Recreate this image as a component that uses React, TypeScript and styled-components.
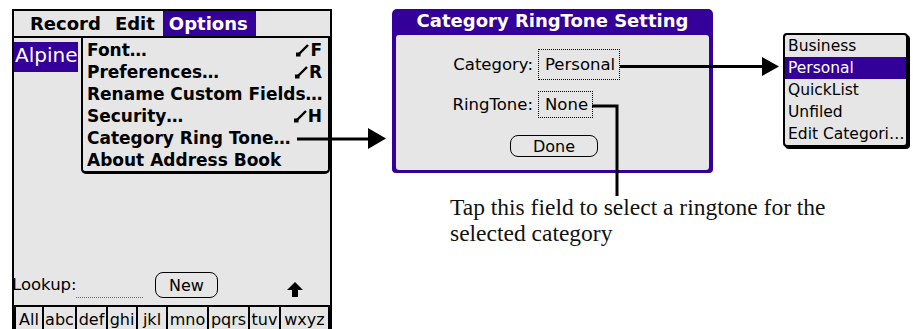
import React from 'react';
import styled, { createGlobalStyle } from 'styled-components';

const PURPLE = '#330099';
const SCREEN_BG = '#e6e6e6';
const PALM_FONT = '"DejaVu Sans", Verdana, sans-serif';

const Global = createGlobalStyle`
  html, body { margin: 0; padding: 0; background: #fff; overflow: hidden; }
  body { width: 913px; height: 329px; }
`;

const Figure = styled.div`
  position: relative;
  width: 913px;
  height: 329px;
  overflow: hidden;
  display: flex;
  align-items: flex-start;
  font-family: ${PALM_FONT};
  color: #000;
`;

/* ---------- Palm screen ---------- */
const Screen = styled.div`
  flex-shrink: 0;
  margin: 9px 0 0 12px;
  width: 316px;
  height: 340px;
  border: 2px solid #000;
  background: ${SCREEN_BG};
  display: flex;
  flex-direction: column;
  overflow: hidden;
`;

const MenuBar = styled.div`
  flex-shrink: 0;
  height: 25px;
  border-bottom: 2px solid #000;
  display: flex;
  padding-left: 10px;
  font-weight: bold;
  font-size: 18px;
  line-height: 25px;
`;

const MenuTitle = styled.div<{ $active?: boolean }>`
  padding: 0 8px 0 6px;
  background: ${(p) => (p.$active ? PURPLE : 'transparent')};
  color: ${(p) => (p.$active ? '#fff' : '#000')};
`;

const ListArea = styled.div`
  position: relative;
  flex-shrink: 0;
  height: 230px;
  padding-top: 4px;
  box-sizing: border-box;
`;

const ListRow = styled.div<{ $selected?: boolean }>`
  width: 64px;
  height: 30px;
  padding-left: 1px;
  box-sizing: border-box;
  font-size: 20px;
  line-height: 26px;
  white-space: nowrap;
  overflow: hidden;
  background: ${(p) => (p.$selected ? PURPLE : 'transparent')};
  color: ${(p) => (p.$selected ? '#fff' : '#000')};
`;

const Menu = styled.div`
  position: absolute;
  top: 0;
  left: 67px;
  right: 0;
  background: ${SCREEN_BG};
  border: 2px solid #000;
  border-top: none;
  border-bottom-width: 3px;
  border-radius: 0 0 5px 5px;
  padding: 1px 6px 0 4px;
  font-weight: bold;
  font-size: 17px;
  line-height: 22px;
`;

const MenuItem = styled.div`
  height: 22px;
  display: flex;
  justify-content: space-between;
  align-items: center;
  white-space: nowrap;
`;

const Shortcut = styled.span`
  display: flex;
  align-items: center;
  gap: 1px;
`;

const LookupRow = styled.div`
  flex-shrink: 0;
  height: 34px;
  margin-bottom: 3px;
  display: flex;
  align-items: center;
`;

const LookupLabel = styled.span`
  flex-shrink: 0;
  width: 64px;
  margin-left: -2px;
  font-size: 16.5px;
  line-height: 20px;
  white-space: nowrap;
`;

const LookupField = styled.span`
  flex-shrink: 0;
  align-self: flex-start;
  margin-top: 29px;
  width: 67px;
  border-top: 1px dotted #666;
`;

const PalmButton = styled.div<{ $w: number; $h: number }>`
  flex-shrink: 0;
  width: ${(p) => p.$w}px;
  height: ${(p) => p.$h}px;
  box-sizing: border-box;
  border: 1.5px solid #000;
  border-radius: 8px;
  display: flex;
  align-items: center;
  justify-content: center;
  font-size: 16px;
`;

const NewButtonSlot = styled.div`
  margin-left: 12px;
`;

const ScrollArrow = styled.svg`
  flex-shrink: 0;
  margin: 9px 27px 0 auto;
`;

const AlphaBar = styled.div`
  flex-shrink: 0;
  height: 30px;
  display: flex;
  border-top: 2px solid #000;
  border-left: 2px solid #000;
`;

const AlphaCell = styled.div<{ $w: number }>`
  width: ${(p) => p.$w}px;
  flex-shrink: 0;
  box-sizing: border-box;
  border-right: 2px solid #000;
  padding-top: 2px;
  text-align: center;
  font-size: 16px;
  line-height: 22px;
  white-space: nowrap;
  overflow: hidden;
`;

/* ---------- Dialog ---------- */
const MiddleColumn = styled.div`
  flex-shrink: 0;
  width: 321px;
  margin: 9px 0 0 60px;
  display: flex;
  flex-direction: column;
`;

const Dialog = styled.div`
  width: 321px;
  height: 164px;
  box-sizing: border-box;
  background: ${PURPLE};
  border-radius: 5px 5px 4px 4px;
  padding: 0 4px 3px;
  display: flex;
  flex-direction: column;
`;

const DialogTitle = styled.div`
  height: 26px;
  flex-shrink: 0;
  color: #fff;
  font-weight: bold;
  font-size: 18px;
  line-height: 24px;
  text-align: center;
  white-space: nowrap;
`;

const DialogBody = styled.div`
  flex: 1;
  background: ${SCREEN_BG};
  border-radius: 3px;
  display: grid;
  grid-template-columns: 87px auto;
  grid-template-rows: 31px 27px 22px;
  column-gap: 5px;
  row-gap: 11px;
  align-content: start;
  justify-items: start;
  padding: 14px 0 0 50px;
  font-size: 16.5px;
`;

const FieldLabel = styled.div`
  justify-self: end;
  align-self: center;
  white-space: nowrap;
`;

const DottedField = styled.div`
  height: 100%;
  box-sizing: border-box;
  border: 1px dotted #000;
  padding: 0 4px 0 6px;
  display: flex;
  align-items: center;
  white-space: nowrap;
`;

const DoneRow = styled.div`
  grid-column: 1 / -1;
  margin: 6px 0 0 64px;
`;

const Caption = styled.p`
  margin: 21px 0 0 58px;
  width: 400px;
  font-family: "Liberation Serif", "Times New Roman", serif;
  font-size: 23.5px;
  line-height: 26px;
  color: #111;
`;

/* ---------- Category popup ---------- */
const Popup = styled.div`
  flex-shrink: 0;
  margin: 33px 0 0 70px;
  width: 125px;
  box-sizing: border-box;
  border: 2px solid #000;
  border-radius: 4px;
  box-shadow: 2px 2px 0 #000;
  background: ${SCREEN_BG};
  font-size: 15.5px;
  line-height: 22px;
`;

const PopupRow = styled.div<{ $selected?: boolean }>`
  height: 22px;
  padding-left: 3px;
  white-space: nowrap;
  overflow: hidden;
  background: ${(p) => (p.$selected ? PURPLE : 'transparent')};
  color: ${(p) => (p.$selected ? '#fff' : '#000')};
`;

const Overlay = styled.svg`
  position: absolute;
  top: 0;
  left: 0;
  pointer-events: none;
`;

const CmdStroke = () => (
  <svg width="14" height="13" viewBox="0 0 14 13">
    <path d="M4 10 L13 1" stroke="#000" strokeWidth="2.4" />
    <rect x="1" y="8.5" width="4.5" height="4" fill="#000" />
  </svg>
);

const menuItems: { label: string; key?: string }[] = [
  { label: 'Font…', key: 'F' },
  { label: 'Preferences…', key: 'R' },
  { label: 'Rename Custom Fields…' },
  { label: 'Security…', key: 'H' },
  { label: 'Category Ring Tone…' },
  { label: 'About Address Book' },
];

const alphaCells: [string, number][] = [
  ['All', 28],
  ['abc', 33],
  ['def', 31],
  ['ghi', 30],
  ['jkl', 30],
  ['mno', 41],
  ['pqrs', 41],
  ['tuv', 31],
  ['wxyz', 49],
];

const categories = ['Business', 'Personal', 'QuickList', 'Unfiled', 'Edit Categori…'];

export default function App() {
  return (
    <>
      <Global />
      <Figure>
        <Screen>
          <MenuBar>
            <MenuTitle>Record</MenuTitle>
            <MenuTitle>Edit</MenuTitle>
            <MenuTitle $active>Options</MenuTitle>
          </MenuBar>
          <ListArea>
            <ListRow $selected>Alpine</ListRow>
            <Menu>
              {menuItems.map((m) => (
                <MenuItem key={m.label}>
                  <span>{m.label}</span>
                  {m.key && (
                    <Shortcut>
                      <CmdStroke />
                      {m.key}
                    </Shortcut>
                  )}
                </MenuItem>
              ))}
            </Menu>
          </ListArea>
          <LookupRow>
            <LookupLabel>Lookup:</LookupLabel>
            <LookupField />
            <NewButtonSlot>
              <PalmButton $w={63} $h={26}>New</PalmButton>
            </NewButtonSlot>
            <ScrollArrow width="16" height="15" viewBox="0 0 16 15">
              <path d="M8 0 L16 8 H11 V15 H5 V8 H0 Z" fill="#000" />
            </ScrollArrow>
          </LookupRow>
          <AlphaBar>
            {alphaCells.map(([t, w]) => (
              <AlphaCell key={t} $w={w}>
                {t}
              </AlphaCell>
            ))}
          </AlphaBar>
        </Screen>

        <MiddleColumn>
          <Dialog>
            <DialogTitle>Category RingTone Setting</DialogTitle>
            <DialogBody>
              <FieldLabel>Category:</FieldLabel>
              <DottedField>Personal</DottedField>
              <FieldLabel>RingTone:</FieldLabel>
              <DottedField>None</DottedField>
              <DoneRow>
                <PalmButton $w={88} $h={22}>Done</PalmButton>
              </DoneRow>
            </DialogBody>
          </Dialog>
          <Caption>Tap this field to select a ringtone for the selected category</Caption>
        </MiddleColumn>

        <Popup>
          {categories.map((c) => (
            <PopupRow key={c} $selected={c === 'Personal'}>
              {c}
            </PopupRow>
          ))}
        </Popup>

        <Overlay width="913" height="329" viewBox="0 0 913 329">
          <path d="M297 139 H370" stroke="#000" strokeWidth="3" />
          <polygon points="368,128 386,138.5 368,149" fill="#000" />
          <path d="M620 66.5 H764" stroke="#000" strokeWidth="3" />
          <polygon points="762,57 779,66.5 762,76" fill="#000" />
          <path d="M592 106 H617 V196" stroke="#000" strokeWidth="3" fill="none" />
        </Overlay>
      </Figure>
    </>
  );
}
